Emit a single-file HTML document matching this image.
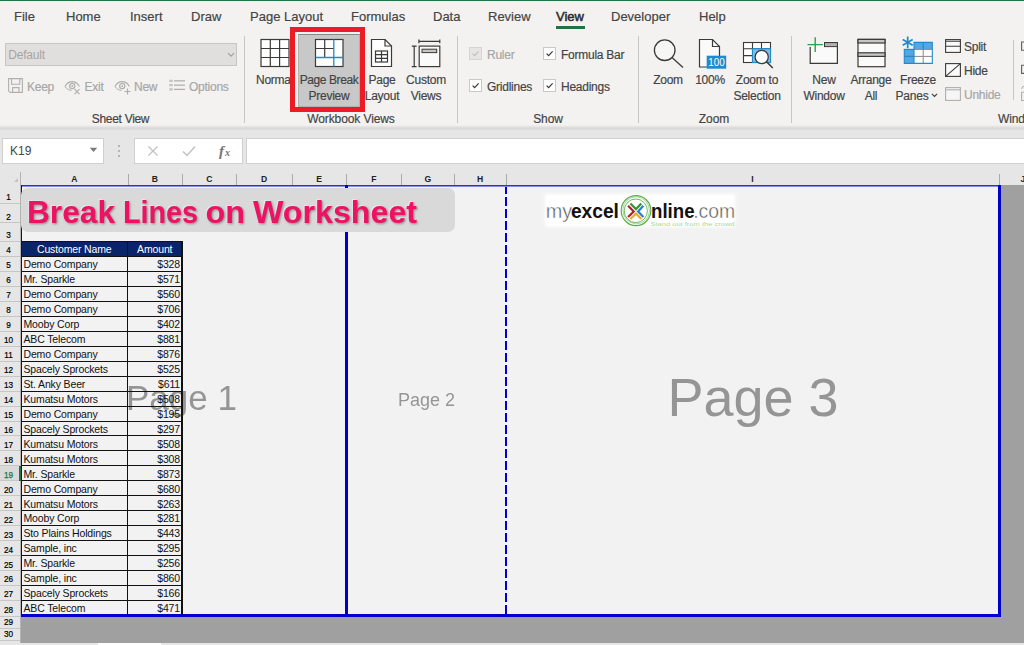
<!DOCTYPE html><html><head><meta charset="utf-8"><title>Excel</title><style>*{box-sizing:border-box;margin:0;padding:0}
html,body{width:1024px;height:645px;overflow:hidden}
body{position:relative;background:#f3f2f1;font-family:"Liberation Sans",sans-serif;color:#3b3a39;font-size:13px}
div,span,svg{position:absolute}
.topgreen{left:0;top:0;width:1024px;height:1px;background:#217346}
.tab{top:9px;height:16px;line-height:16px;font-size:13px;color:#444;white-space:nowrap}
.tab.on{font-weight:normal;color:#2b2b2b;-webkit-text-stroke:.5px #2b2b2b}
.tabul{left:556px;top:26px;width:29px;height:3px;background:#217346}
.rt{font-size:12.5px;color:#444;white-space:nowrap;line-height:16px;height:16px;text-align:center}
.rt.dis{color:#a6a6a6}
.gl{font-size:12px;color:#444;white-space:nowrap;line-height:14px;height:14px;text-align:center;top:111px}
.vsep{width:1px;background:#c8c6c4;top:36px;height:87px}
.ribshadow{left:0;top:125px;width:1024px;height:7px;background:linear-gradient(#f3f2f1,#d8d8d8 45%,#e3e3e3 80%,#e6e6e6)}
.fbar{left:0;top:131px;width:1024px;height:41px;background:#e6e6e6}
.box{background:#fff;border:1px solid #d0d0d0}
/* sheet */
.colhdr{left:0;top:172px;width:1024px;height:13px;background:#e6e6e6}
.ch{top:2.5px;height:9px;line-height:9px;font-size:8.6px;font-weight:bold;color:#222;text-align:center}
.chs{top:2px;width:1px;height:11px;background:#ababab}
.corner{left:13.5px;top:5.5px;width:0;height:0;border-left:4px solid transparent;border-bottom:4px solid #c2c2c2}
.rowhdr{left:0;top:0;width:21px;height:645px}
.rowhdr{background:linear-gradient(transparent 185px,#e6e6e6 185px)}
.rh{left:0;width:17px;height:10px;line-height:10px;font-size:8.2px;color:#000;text-align:center;-webkit-text-stroke:.2px #000}
.rh.sel{color:#217346;-webkit-text-stroke:.25px #217346}
.rhs{left:0;width:20px;height:1px;background:#c6c6c6}
.rhv{left:20px;top:172px;width:1px;height:473px;background:#b4b4b4}
.grey{left:21px;top:185px;width:1003px;height:458px;background:#a0a0a0}
.pages{left:21px;top:185px;width:979px;height:431px;background:#f2f2f2}
.titlebox{left:21px;top:188px;width:433.5px;height:43.8px;border-radius:7px;background:#d9d9d9;z-index:5}
.titlebox span{left:7.5px;top:6.5px;font-size:32px;letter-spacing:-.42px;line-height:34px;font-weight:bold;color:#ec1562;white-space:nowrap;text-shadow:1px 1.5px 1.5px rgba(70,70,70,.75)}
.thead{z-index:2;left:21px;width:161px;background:#0a246a}
.tc{z-index:2;letter-spacing:-.15px;font-size:10.5px;line-height:15px;height:15px;color:#111;white-space:nowrap}
.tc.th{color:#fff;text-align:center}
.tc.l{left:23.5px}
.tc.r{left:128px;width:52px;text-align:right}
.hl{z-index:2;left:21px;width:162px;height:1px;background:#111}
.vl{z-index:2;top:241px;width:1px;height:374px;background:#111}
.pg{color:#8c8c8c;white-space:nowrap;opacity:.9;z-index:1}
.p1{left:126px;top:375px;font-size:35px;line-height:46px}
.p2{left:398px;top:389px;font-size:18px;line-height:22px}
.p3{left:667.5px;top:366.5px;font-size:54px;line-height:60px}
.bl{background:#0000cc;z-index:3}
.bl.top{left:21px;top:185px;width:980px;height:2px;background:linear-gradient(#3434b8 0 1px,#8a8aea 1px 2px)}
.bl.left{left:21px;top:185px;width:1.3px;height:431px}
.bl.right{left:998px;top:185px;width:3px;height:432px}
.bl.bottom{left:21px;top:614px;width:980px;height:3.2px}
.bl.mid{left:345px;top:185px;width:3px;height:430px}
.dash{left:504.6px;top:184.7px;width:2.4px;height:429.5px;z-index:2;background:repeating-linear-gradient(#0000cc 0 9.2px,transparent 9.2px 12px)}
.bottomstrip{left:0;top:643px;width:1024px;height:2px;background:#e6e6e6}
.bottomtab{left:97.6px;top:643px;width:63px;height:2px;background:#fff}
.dd{background:#e1dfdd;border:1px solid #c8c6c4}
.ddt{left:2.3px;top:3px;font-size:12px;letter-spacing:-.2px;line-height:16px;color:#a6a4a2}
.redbox{left:290px;top:27px;width:75px;height:84.5px;border:5px solid #ed1c24;background:#f3f2f1}
.selbtn{left:298px;top:34px;width:62px;height:72.5px;background:#c8c8c8;border:1px solid #b3b0ad;border-top-color:#8a8886}
.rt{font-size:12px;letter-spacing:-.25px}
.gl{font-size:12px;letter-spacing:-.1px;top:111.5px}
.cb{width:13px;height:13px;background:#fff;border:1px solid #cbc9c7}
.cb.dis{background:#e7e6e5;border-color:#d6d4d2}
.cb svg{left:0;top:0}
.nb{left:10px;top:143px;font-size:12px;line-height:16px;color:#444}
.dot{left:118px;width:2px;height:2px;background:#b5b5b5}
.fx{left:217px;top:141px;width:16px;height:20px;color:#747474;font-family:"Liberation Serif",serif}
.fx i{left:2px;top:0;font-size:15px;line-height:20px;font-style:italic;font-weight:bold;position:absolute}
.fx span{left:8px;top:6px;font-size:10px;line-height:12px;font-style:italic;font-weight:bold}
.r19bg{left:0;top:466px;width:20px;height:15px;background:#d9d9d9}
.r19g{left:19px;top:466px;width:2px;height:15px;background:#217346;z-index:3}
.ttl{z-index:6;filter:drop-shadow(1px 1.5px 1px rgba(85,85,85,.65)) drop-shadow(-.6px -.6px .5px rgba(255,255,255,.45))}
.rt,.gl,.tab{-webkit-text-stroke:.18px currentColor}
</style></head><body>
<div class="topgreen"></div>
<div class="tab" style="left:14px">File</div>
<div class="tab" style="left:66px">Home</div>
<div class="tab" style="left:130px">Insert</div>
<div class="tab" style="left:191px">Draw</div>
<div class="tab" style="left:250px">Page Layout</div>
<div class="tab" style="left:351px">Formulas</div>
<div class="tab" style="left:433px">Data</div>
<div class="tab" style="left:488px">Review</div>
<div class="tab on" style="left:556px">View</div>
<div class="tab" style="left:611px">Developer</div>
<div class="tab" style="left:699px">Help</div>
<div class="tabul"></div>

<!-- Sheet View group -->
<div class="dd" style="left:5px;top:43px;width:232px;height:23px"><span class="ddt">Default</span>
<svg style="left:221px;top:8px" width="8" height="6" viewBox="0 0 8 6"><path d="M1 1.2 L4 4.2 L7 1.2" fill="none" stroke="#a19f9d" stroke-width="1.2"/></svg></div>
<svg style="left:8px;top:78px" width="16" height="16" viewBox="0 0 16 16" fill="none" stroke="#b1afad" stroke-width="1.1"><path d="M.6 .6h13.8v13.8H2.2L.6 12.8z"/><path d="M3.6 .6v5.6h8.2V.6"/><path d="M4.6 14.4V9.6h6.4v4.8"/></svg>
<div class="rt dis" style="left:27px;top:79px">Keep</div>
<svg style="left:64px;top:79px" width="19" height="16" viewBox="0 0 19 16" fill="none" stroke="#b1afad" stroke-width="1.2"><path d="M1 7.5C3 3.6 6 2.6 8.2 2.6s5.2 1 7.2 4.9"/><path d="M1 7.5C2.6 10 5 11.3 7.6 11.4" stroke-width="1"/><circle cx="8.2" cy="7" r="2.6"/><circle cx="8.2" cy="7" r=".9" fill="#b1afad" stroke="none"/><path d="M10.5 10.2l5 5M15.5 10.2l-5 5"/></svg>
<div class="rt dis" style="left:84.5px;top:79px">Exit</div>
<svg style="left:114px;top:79px" width="19" height="16" viewBox="0 0 19 16" fill="none" stroke="#b1afad" stroke-width="1.2"><path d="M1 7.5C3 3.6 6 2.6 8.2 2.6s5.2 1 7.2 4.9"/><path d="M1 7.5C2.6 10 5 11.3 7.6 11.4" stroke-width="1"/><circle cx="8.2" cy="7" r="2.6"/><circle cx="8.2" cy="7" r=".9" fill="#b1afad" stroke="none"/><path d="M13.5 9.5v6M10.5 12.5h6"/></svg>
<div class="rt dis" style="left:134px;top:79px">New</div>
<svg style="left:169px;top:79.3px" width="17" height="12.2" viewBox="0 0 17 13" preserveAspectRatio="none" fill="none" stroke="#b1afad" stroke-width="1.2"><path d="M5 2h11M5 6.5h11M5 11h11"/><path d="M.5 2h3M.5 6.5h3M.5 11h3" stroke-width="2.4" stroke-dasharray="1.2 .6"/></svg>
<div class="rt dis" style="left:189px;top:79px">Options</div>
<div class="gl" style="left:60.5px;width:120px;letter-spacing:-.3px">Sheet View</div>
<div class="vsep" style="left:244px"></div>

<!-- Workbook Views -->
<svg style="left:260px;top:38px" width="30" height="30" viewBox="0 0 30 30" fill="#fff" stroke="#3b3a39" stroke-width="1.2"><rect x="1" y="1.5" width="28" height="27"/><path d="M10.3 1.5v27M19.6 1.5v27M1 10.5h28M1 19.5h28" fill="none"/></svg>
<div class="rt" style="left:256px;top:72px;width:35px;overflow:hidden;text-align:left">Normal</div>
<div class="redbox"></div>
<div class="selbtn"></div>
<svg style="left:313.5px;top:38px" width="31" height="30" viewBox="0 0 31 30" fill="#fff" stroke="#3b3a39" stroke-width="1.2"><rect x="1.5" y="1.5" width="27.5" height="27"/><path d="M10.7 1.5v18M1.5 10.5h18.3" fill="none"/><path d="M19.8 1.5v27M1.5 19.5h27.5" fill="none" stroke="#1e8bcd" stroke-width="1.3"/></svg>
<div class="rt" style="left:294px;top:72px;width:70px;letter-spacing:-.42px">Page Break</div>
<div class="rt" style="left:294px;top:88px;width:70px">Preview</div>
<svg style="left:370px;top:38px" width="23" height="30" viewBox="0 0 23 30" fill="#fff" stroke="#3b3a39" stroke-width="1.2"><path d="M1.5 1.5h13.5l6.5 6.5v20.5h-20z"/><path d="M15 1.5v6.5h6.5" fill="none"/><rect x="5.5" y="13" width="12" height="11" fill="none"/><path d="M5.5 16.7h12M5.5 20.3h12M11.5 13v11" fill="none"/></svg>
<div class="rt" style="left:362px;top:72px;width:40px">Page</div>
<div class="rt" style="left:362px;top:88px;width:40px">Layout</div>
<svg style="left:410px;top:38px" width="32" height="30" viewBox="0 0 32 30" fill="none" stroke="#3b3a39" stroke-width="1.2"><path d="M8.9 3.4h20.9M8.9 1.6v3.6M29.8 1.6v3.6"/><path d="M4.2 8.1v20.5M1.8 8.1h4.8M1.8 28.6h4.8"/><rect x="9.2" y="8.1" width="20.6" height="20.5" fill="#fafafa"/><rect x="12" y="11.2" width="14.7" height="3.4" fill="#c8c6c4" stroke-width="1"/></svg>
<div class="rt" style="left:401px;top:72px;width:50px">Custom</div>
<div class="rt" style="left:401px;top:88px;width:50px">Views</div>
<div class="gl" style="left:291px;width:120px">Workbook Views</div>
<div class="vsep" style="left:457px"></div>
<!--RIGHT-->
<!-- Show group -->
<div class="cb dis" style="left:469px;top:47px"><svg width="11" height="11" viewBox="0 0 11 11"><path d="M2.6 5.6l2 2.1L8.6 3.4" fill="none" stroke="#c0bebc" stroke-width="1.2"/></svg></div>
<div class="rt dis" style="left:487px;top:47px">Ruler</div>
<div class="cb" style="left:543px;top:47px"><svg width="11" height="11" viewBox="0 0 11 11"><path d="M2.6 5.6l2 2.1L8.6 3.4" fill="none" stroke="#3b3a39" stroke-width="1.2"/></svg></div>
<div class="rt" style="left:561px;top:47px">Formula Bar</div>
<div class="cb" style="left:469px;top:79px"><svg width="11" height="11" viewBox="0 0 11 11"><path d="M2.6 5.6l2 2.1L8.6 3.4" fill="none" stroke="#3b3a39" stroke-width="1.2"/></svg></div>
<div class="rt" style="left:487px;top:79px">Gridlines</div>
<div class="cb" style="left:543px;top:79px"><svg width="11" height="11" viewBox="0 0 11 11"><path d="M2.6 5.6l2 2.1L8.6 3.4" fill="none" stroke="#3b3a39" stroke-width="1.2"/></svg></div>
<div class="rt" style="left:561px;top:79px">Headings</div>
<div class="gl" style="left:488px;width:120px">Show</div>
<div class="vsep" style="left:638px"></div>

<!-- Zoom group -->
<svg style="left:652px;top:38px" width="33" height="32" viewBox="0 0 33 32" fill="none" stroke="#3b3a39" stroke-width="1.3"><circle cx="12.7" cy="12.2" r="10.3" fill="#f6f6f5"/><path d="M20 19.5l11 10"/></svg>
<div class="rt" style="left:643px;top:72px;width:50px">Zoom</div>
<svg style="left:698px;top:38px" width="31" height="32" viewBox="0 0 31 32"><path d="M1.5 1.5h13l7 7v20.5h-20z" fill="#fafafa" stroke="#3b3a39" stroke-width="1.2"/><path d="M14.5 1.5v7h7" fill="none" stroke="#3b3a39" stroke-width="1.2"/><rect x="8.7" y="17.7" width="19.5" height="13" fill="#1e8bcd"/><text x="18.4" y="28.4" font-family="Liberation Sans" font-size="11" fill="#fff" text-anchor="middle" textLength="16.5" lengthAdjust="spacingAndGlyphs">100</text></svg>
<div class="rt" style="left:685px;top:72px;width:50px">100%</div>
<svg style="left:741px;top:39px" width="33" height="30" viewBox="0 0 33 30" fill="none" stroke="#3b3a39" stroke-width="1.1"><rect x="2.5" y="3.5" width="27" height="20" fill="#fff"/><path d="M11.5 3.5v20M20.5 3.5v20M2.5 9.8h27M2.5 16.6h27"/><rect x="11.5" y="9.8" width="18" height="13.7" fill="#7fbde9" stroke="#1e8bcd"/><circle cx="20.7" cy="18" r="6.6" fill="#fff" stroke-width="1.3"/><path d="M25.5 22.8l6.3 6.2" stroke-width="1.5"/></svg>
<div class="rt" style="left:727px;top:72px;width:60px">Zoom to</div>
<div class="rt" style="left:727px;top:88px;width:60px">Selection</div>
<div class="gl" style="left:654px;width:120px">Zoom</div>
<div class="vsep" style="left:791px"></div>

<!-- Window group -->
<svg style="left:806px;top:36px" width="34" height="30" viewBox="0 0 34 30" fill="none"><path d="M4.2 11V27.4H31.4V6.6H18.5" fill="#fafafa" stroke="#3b3a39" stroke-width="1.2"/><rect x="18.5" y="6.6" width="12.9" height="4" fill="#b5b3b1" stroke="#3b3a39" stroke-width="1"/><path d="M9.2 1.3v14.6M1.5 8.6h15.4" stroke="#2ea043" stroke-width="1.4"/></svg>
<div class="rt" style="left:794px;top:72px;width:60px">New</div>
<div class="rt" style="left:794px;top:88px;width:60px">Window</div>
<svg style="left:857px;top:38px" width="30" height="30" viewBox="0 0 30 30" fill="none" stroke="#3b3a39" stroke-width="1.2"><rect x="1" y="1.4" width="27" height="27.3" fill="#fafafa"/><rect x="1" y="1.4" width="27" height="3.6" fill="#c8c6c4"/><rect x="1" y="14.8" width="27" height="3.6" fill="#c8c6c4"/></svg>
<div class="rt" style="left:841px;top:72px;width:60px">Arrange</div>
<div class="rt" style="left:841px;top:88px;width:60px">All</div>
<svg style="left:900px;top:36px" width="34" height="31" viewBox="0 0 34 31" fill="none"><rect x="4.3" y="6.4" width="28" height="21" fill="#fff"/><rect x="4.3" y="6.4" width="28" height="7" fill="#56a6e4"/><rect x="4.3" y="6.4" width="9.7" height="21" fill="#56a6e4"/><path d="M14 13.4h18.3M14 20.4h18.3M23.2 13.4v14" stroke="#8a8886" stroke-width="1"/><path d="M4.3 6.4h28v21h-28zM14 6.4v21M23.2 6.4v7M4.3 13.4h9.7M4.3 20.4h9.7" stroke="#1e8bcd" stroke-width="1.1"/><rect x="0" y="0" width="13.4" height="12.8" fill="#f3f2f1"/><path d="M7.7 .6v11.6M2.7 3.5l10 5.8M12.7 3.5l-10 5.8" stroke="#1e8bcd" stroke-width="1.7"/></svg>
<div class="rt" style="left:888px;top:72px;width:60px">Freeze</div>
<div class="rt" style="left:882px;top:88px;width:60px">Panes</div>
<svg style="left:931px;top:93px" width="7" height="5" viewBox="0 0 7 5"><path d="M.9 .9L3.5 3.5 6.1 .9" fill="none" stroke="#3b3a39" stroke-width="1.1"/></svg>
<svg style="left:945px;top:39px" width="16" height="14" viewBox="0 0 16 14" fill="#fafafa" stroke="#3b3a39" stroke-width="1.1"><rect x=".6" y=".6" width="14.8" height="12.8"/><path d="M.6 2.3h14.8M.6 7.2h14.8" fill="none"/></svg>
<div class="rt" style="left:964px;top:38.5px">Split</div>
<svg style="left:945px;top:63px" width="16" height="14" viewBox="0 0 16 14" fill="#fafafa" stroke="#3b3a39" stroke-width="1.1"><rect x=".6" y=".6" width="14.8" height="12.8"/><path d="M.6 13.4L15.4 .6" fill="none"/></svg>
<div class="rt" style="left:964px;top:62.5px">Hide</div>
<svg style="left:945px;top:87px" width="16" height="14" viewBox="0 0 16 14" fill="#f6f6f6" stroke="#b1afad" stroke-width="1.1"><rect x=".6" y=".6" width="14.8" height="12.8"/><path d="M.6 2.8h14.8" fill="none"/></svg>
<div class="rt dis" style="left:964px;top:86.5px">Unhide</div>
<div class="vsep" style="left:1013px;top:40px;height:60px"></div>
<svg style="left:1021px;top:38px" width="3" height="66" viewBox="0 0 3 66" fill="none" stroke="#605e5c" stroke-width="1.1"><path d="M3 4H.6v8.2H3"/><path d="M3 27.2H.6v8.2H3"/><path d="M3 54.3H.6v8.2H3M.8 51c.2-1.8 1-2.6 2.2-2.8" stroke="#b1afad"/></svg>
<div class="gl" style="left:998px;width:40px;text-align:left">Window</div>

<div class="ribshadow"></div>
<div class="fbar"></div>
<div class="box" style="left:2px;top:138px;width:102px;height:26px"></div>
<div class="nb">K19</div>
<svg style="left:89px;top:147px" width="9" height="6" viewBox="0 0 9 6"><path d="M.8 .8h7.4L4.5 5z" fill="#7a7a7a"/></svg>
<div class="dot" style="top:145px"></div><div class="dot" style="top:150px"></div><div class="dot" style="top:155px"></div>
<div class="box" style="left:134px;top:138px;width:109px;height:26px"></div>
<svg style="left:147px;top:145px" width="12" height="12" viewBox="0 0 12 12"><path d="M1.5 1.5l9 9M10.5 1.5l-9 9" stroke="#c2c2c2" stroke-width="1.3" fill="none"/></svg>
<svg style="left:182px;top:145px" width="14" height="12" viewBox="0 0 14 12"><path d="M1 6.5l4 4L13 1.5" stroke="#c2c2c2" stroke-width="1.5" fill="none"/></svg>
<div class="fx"><i>f</i><span>x</span></div>
<div class="box" style="left:246px;top:138px;width:790px;height:26px"></div>

<div class="colhdr">
<div class="ch" style="left:21px;width:106.5px">A</div>
<div class="chs" style="left:128px"></div>
<div class="ch" style="left:127.5px;width:54.5px">B</div>
<div class="chs" style="left:182px"></div>
<div class="ch" style="left:182px;width:54.5px">C</div>
<div class="chs" style="left:236px"></div>
<div class="ch" style="left:236.5px;width:55.0px">D</div>
<div class="chs" style="left:292px"></div>
<div class="ch" style="left:291.5px;width:55.0px">E</div>
<div class="chs" style="left:346px"></div>
<div class="ch" style="left:346.5px;width:54.75px">F</div>
<div class="chs" style="left:401px"></div>
<div class="ch" style="left:401.25px;width:53.0px">G</div>
<div class="chs" style="left:454px"></div>
<div class="ch" style="left:454.25px;width:51.5px">H</div>
<div class="chs" style="left:506px"></div>
<div class="ch" style="left:505.75px;width:493.5px">I</div>
<div class="chs" style="left:999px"></div>
<div class="chs" style="left:20px"></div>
<div class="corner"></div><div class="ch" style="left:1020.5px;width:10px;text-align:left">J</div>
</div>
<div class="rowhdr">
<div class="r19bg"></div>
<div class="rh" style="top:193.40px">1</div>
<div class="rh" style="top:212.90px">2</div>
<div class="rh" style="top:231.40px">3</div>
<div class="rh" style="top:246.36px">4</div>
<div class="rh" style="top:261.32px">5</div>
<div class="rh" style="top:276.28px">6</div>
<div class="rh" style="top:291.24px">7</div>
<div class="rh" style="top:306.20px">8</div>
<div class="rh" style="top:321.16px">9</div>
<div class="rh" style="top:336.12px">10</div>
<div class="rh" style="top:351.08px">11</div>
<div class="rh" style="top:366.04px">12</div>
<div class="rh" style="top:381.00px">13</div>
<div class="rh" style="top:395.96px">14</div>
<div class="rh" style="top:410.92px">15</div>
<div class="rh" style="top:425.88px">16</div>
<div class="rh" style="top:440.84px">17</div>
<div class="rh" style="top:455.80px">18</div>
<div class="rh sel" style="top:470.76px">19</div>
<div class="rh" style="top:485.72px">20</div>
<div class="rh" style="top:500.68px">21</div>
<div class="rh" style="top:515.64px">22</div>
<div class="rh" style="top:530.60px">23</div>
<div class="rh" style="top:545.56px">24</div>
<div class="rh" style="top:560.52px">25</div>
<div class="rh" style="top:575.48px">26</div>
<div class="rh" style="top:590.44px">27</div>
<div class="rh" style="top:605.90px">28</div>
<div class="rh" style="top:617.90px">29</div>
<div class="rh" style="top:630.40px">30</div>
<div class="rh" style="top:642.90px">31</div>
<div class="rhs" style="top:203px"></div>
<div class="rhs" style="top:222px"></div>
<div class="rhs" style="top:241px"></div>
<div class="rhs" style="top:256px"></div>
<div class="rhs" style="top:271px"></div>
<div class="rhs" style="top:286px"></div>
<div class="rhs" style="top:301px"></div>
<div class="rhs" style="top:316px"></div>
<div class="rhs" style="top:331px"></div>
<div class="rhs" style="top:346px"></div>
<div class="rhs" style="top:361px"></div>
<div class="rhs" style="top:376px"></div>
<div class="rhs" style="top:391px"></div>
<div class="rhs" style="top:406px"></div>
<div class="rhs" style="top:421px"></div>
<div class="rhs" style="top:435px"></div>
<div class="rhs" style="top:450px"></div>
<div class="rhs" style="top:465px"></div>
<div class="rhs" style="top:480px"></div>
<div class="rhs" style="top:495px"></div>
<div class="rhs" style="top:510px"></div>
<div class="rhs" style="top:525px"></div>
<div class="rhs" style="top:540px"></div>
<div class="rhs" style="top:555px"></div>
<div class="rhs" style="top:570px"></div>
<div class="rhs" style="top:585px"></div>
<div class="rhs" style="top:600px"></div>
<div class="rhs" style="top:616px"></div>
<div class="rhs" style="top:628px"></div>
<div class="rhs" style="top:640px"></div>
<div class="rhs" style="top:652px"></div>
<div class="rhv"></div><div class="r19g"></div>
</div>
<div class="grey"></div><div class="pages"></div>
<div class="titlebox"></div>
<svg class="ttl" style="left:0;top:186px" width="460" height="50" viewBox="0 186 460 50"><g font-family="Liberation Sans" font-weight="bold" font-size="32" fill="#ee1263" lengthAdjust="spacingAndGlyphs"><text x="27" y="222.8" textLength="88" lengthAdjust="spacingAndGlyphs">Break</text><text x="123" y="222.8" textLength="75" lengthAdjust="spacingAndGlyphs">Lines</text><text x="205.6" y="222.8" textLength="39.5" lengthAdjust="spacingAndGlyphs">on</text><text x="253" y="222.8" textLength="164" lengthAdjust="spacingAndGlyphs">Worksheet</text></g></svg>
<div class="thead" style="top:241px;height:15px"></div>
<div class="tc th" style="left:21px;width:106.5px;top:242.2px">Customer Name</div>
<div class="tc th" style="left:127.5px;width:54.5px;top:242.2px">Amount</div>
<div class="tc l" style="top:257.16px">Demo Company</div><div class="tc r" style="top:257.16px">$328</div>
<div class="tc l" style="top:272.12px">Mr. Sparkle</div><div class="tc r" style="top:272.12px">$571</div>
<div class="tc l" style="top:287.08px">Demo Company</div><div class="tc r" style="top:287.08px">$560</div>
<div class="tc l" style="top:302.04px">Demo Company</div><div class="tc r" style="top:302.04px">$706</div>
<div class="tc l" style="top:317.00px">Mooby Corp</div><div class="tc r" style="top:317.00px">$402</div>
<div class="tc l" style="top:331.96px">ABC Telecom</div><div class="tc r" style="top:331.96px">$881</div>
<div class="tc l" style="top:346.92px">Demo Company</div><div class="tc r" style="top:346.92px">$876</div>
<div class="tc l" style="top:361.88px">Spacely Sprockets</div><div class="tc r" style="top:361.88px">$525</div>
<div class="tc l" style="top:376.84px">St. Anky Beer</div><div class="tc r" style="top:376.84px">$611</div>
<div class="tc l" style="top:391.80px">Kumatsu Motors</div><div class="tc r" style="top:391.80px">$508</div>
<div class="tc l" style="top:406.76px">Demo Company</div><div class="tc r" style="top:406.76px">$195</div>
<div class="tc l" style="top:421.72px">Spacely Sprockets</div><div class="tc r" style="top:421.72px">$297</div>
<div class="tc l" style="top:436.68px">Kumatsu Motors</div><div class="tc r" style="top:436.68px">$508</div>
<div class="tc l" style="top:451.64px">Kumatsu Motors</div><div class="tc r" style="top:451.64px">$308</div>
<div class="tc l" style="top:466.60px">Mr. Sparkle</div><div class="tc r" style="top:466.60px">$873</div>
<div class="tc l" style="top:481.56px">Demo Company</div><div class="tc r" style="top:481.56px">$680</div>
<div class="tc l" style="top:496.52px">Kumatsu Motors</div><div class="tc r" style="top:496.52px">$263</div>
<div class="tc l" style="top:511.48px">Mooby Corp</div><div class="tc r" style="top:511.48px">$281</div>
<div class="tc l" style="top:526.44px">Sto Plains Holdings</div><div class="tc r" style="top:526.44px">$443</div>
<div class="tc l" style="top:541.40px">Sample, inc</div><div class="tc r" style="top:541.40px">$295</div>
<div class="tc l" style="top:556.36px">Mr. Sparkle</div><div class="tc r" style="top:556.36px">$256</div>
<div class="tc l" style="top:571.32px">Sample, inc</div><div class="tc r" style="top:571.32px">$860</div>
<div class="tc l" style="top:586.28px">Spacely Sprockets</div><div class="tc r" style="top:586.28px">$166</div>
<div class="tc l" style="top:601.24px">ABC Telecom</div><div class="tc r" style="top:601.24px">$471</div>
<div class="hl" style="top:241px"></div>
<div class="hl" style="top:256px"></div>
<div class="hl" style="top:271px"></div>
<div class="hl" style="top:286px"></div>
<div class="hl" style="top:301px"></div>
<div class="hl" style="top:316px"></div>
<div class="hl" style="top:331px"></div>
<div class="hl" style="top:346px"></div>
<div class="hl" style="top:361px"></div>
<div class="hl" style="top:376px"></div>
<div class="hl" style="top:391px"></div>
<div class="hl" style="top:406px"></div>
<div class="hl" style="top:421px"></div>
<div class="hl" style="top:435px"></div>
<div class="hl" style="top:450px"></div>
<div class="hl" style="top:465px"></div>
<div class="hl" style="top:480px"></div>
<div class="hl" style="top:495px"></div>
<div class="hl" style="top:510px"></div>
<div class="hl" style="top:525px"></div>
<div class="hl" style="top:540px"></div>
<div class="hl" style="top:555px"></div>
<div class="hl" style="top:570px"></div>
<div class="hl" style="top:585px"></div>
<div class="hl" style="top:600px"></div>
<div class="vl" style="left:127px"></div><div class="vl" style="left:181px;width:1.6px"></div>
<div class="pg p1">Page 1</div><div class="pg p2">Page 2</div><div class="pg p3">Page 3</div>
<div class="bl top"></div><div class="bl left"></div><div class="bl right"></div><div class="bl bottom"></div><div class="bl mid"></div><div class="dash"></div>
<svg class="logo" style="left:538px;top:188px" width="204" height="46" viewBox="0 0 204 46">
<defs><filter id="lb" x="-10%" y="-30%" width="120%" height="160%"><feGaussianBlur stdDeviation="1.6"/></filter></defs>
<rect x="7" y="6" width="190" height="33" fill="#fff" filter="url(#lb)"/>
<g font-family="Liberation Sans" font-size="20.5">
<text x="7.8" y="30" fill="#5a5a5a" textLength="26.5" lengthAdjust="spacingAndGlyphs" stroke="#fcfcfc" stroke-width=".45">my</text>
<text x="32.9" y="30" fill="#111" font-weight="bold" textLength="48" lengthAdjust="spacingAndGlyphs">excel</text>
<text x="113" y="30" fill="#111" font-weight="bold" textLength="43.5" lengthAdjust="spacingAndGlyphs">nline</text>
<text x="155.2" y="30" fill="#5a5a5a" textLength="42" lengthAdjust="spacingAndGlyphs" stroke="#fcfcfc" stroke-width=".45">.com</text>
</g>
<text x="112.5" y="37.7" font-family="Liberation Sans" font-size="5.6" fill="#a8d79d" textLength="84" lengthAdjust="spacingAndGlyphs">Stand out from the crowd</text>
<g fill="none" stroke="#4aa63a">
<ellipse cx="98" cy="22.6" rx="14.8" ry="15" stroke-width="1.2" opacity=".9"/>
<ellipse cx="98.2" cy="22.4" rx="13.2" ry="13.6" stroke-width=".8" opacity=".55" transform="rotate(-20 98 22.5)"/>
<ellipse cx="97.8" cy="22.8" rx="11.6" ry="11.8" stroke-width="1" opacity=".8"/>
</g>
<g fill="none" stroke-width="2.15" stroke-linecap="butt" stroke-linejoin="miter">
<path d="M92.4 15.5l5.6 5.6 5.3-5.6" stroke="#35942b"/>
<path d="M90.1 17.8l5.6 5.6-5.6 5.6" stroke="#bf1730"/>
<path d="M105.4 17.8l-5.3 5.6 5.3 5.6" stroke="#1e7fd8"/>
<path d="M92.4 31.1l5.6-5.6 5.3 5.6" stroke="#f2a81d"/>
</g>
</svg>

<div class="bottomstrip"></div><div class="bottomtab"></div>
</body></html>
